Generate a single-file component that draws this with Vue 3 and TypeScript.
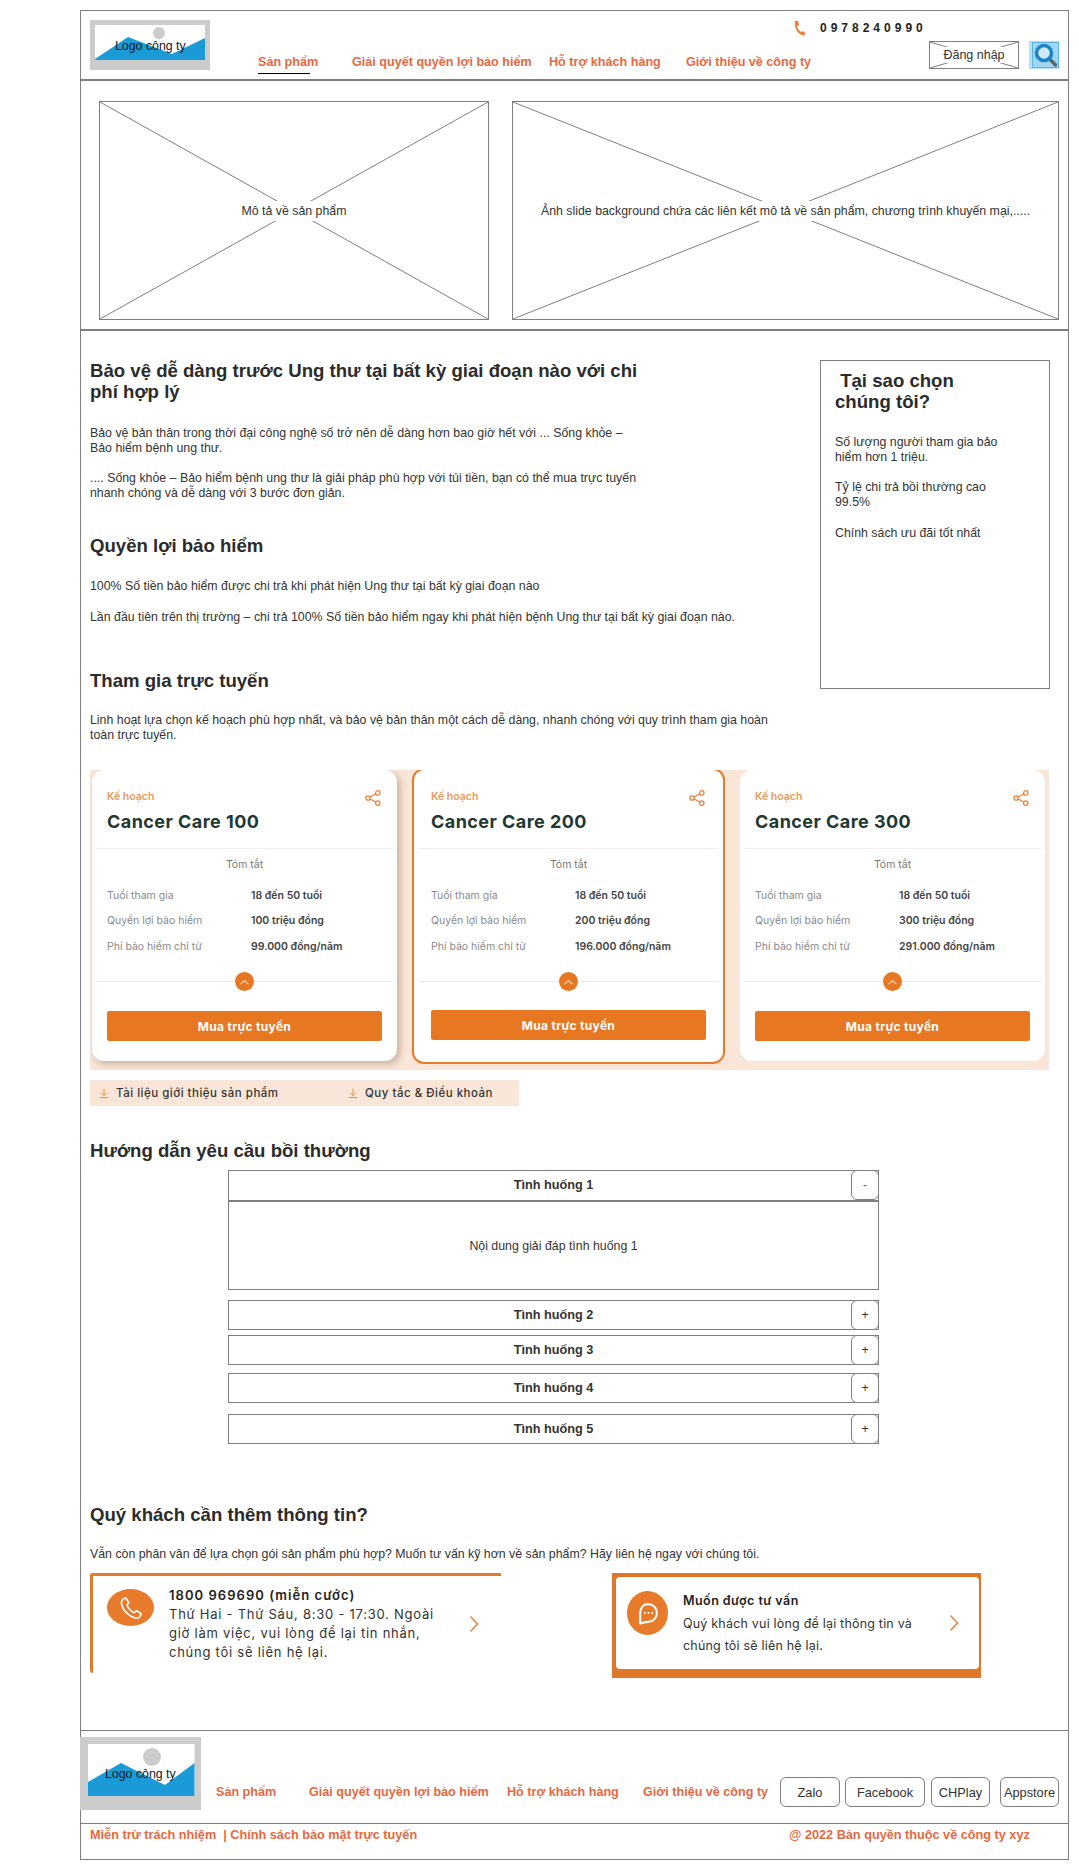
<script setup lang="ts">
const nav = ['Sản phẩm', 'Giải quyết quyền lợi bảo hiểm', 'Hỗ trợ khách hàng', 'Giới thiệu về công ty']
const plans = [
  { name: 'Cancer Care 100', benefit: '100 triệu đồng', fee: '99.000 đồng/năm', cls: 'plan-a' },
  { name: 'Cancer Care 200', benefit: '200 triệu đồng', fee: '196.000 đồng/năm', cls: 'plan-b' },
  { name: 'Cancer Care 300', benefit: '300 triệu đồng', fee: '291.000 đồng/năm', cls: 'plan-c' },
]
const cases = [2, 3, 4, 5]
const stores = ['Zalo', 'Facebook', 'CHPlay', 'Appstore']
</script>

<template>
  <div class="page">
    <div class="frame">
      <header class="top">
        <div class="logo">
          <svg class="fill" viewBox="0 0 120 50">
            <rect width="120" height="50" fill="#cccccc" />
            <rect x="5" y="5" width="110" height="35" fill="#ffffff" />
            <circle cx="69" cy="13" r="6" fill="#cccccc" />
            <path d="M5 39 38 17 82 34 115 18V40H5Z" fill="#1a9ad6" />
          </svg>
          <span class="logo-text">Logo công ty</span>
        </div>
        <nav class="nav">
          <a v-for="(n, i) in nav" :key="n" class="nav-item" :class="{ active: i === 0 }">{{ n }}</a>
        </nav>
        <div class="top-right">
          <div class="phone">
            <svg class="phone-ico" viewBox="0 0 14 16">
              <path d="M2 1 5 .6 6 5 4.200 6.200C4.700 8.500 6 10.500 8 12L9.800 11 12.800 13.400 11 15.400C6 15.800 .5 8 2 1Z" fill="#e9833c" />
            </svg>
            <span class="phone-num">0978240990</span>
          </div>
          <div class="actions">
            <button class="login">
              <svg class="fill" viewBox="0 0 100 100" preserveAspectRatio="none">
                <line x1="0" y1="0" x2="100" y2="100" vector-effect="non-scaling-stroke" />
                <line x1="100" y1="0" x2="0" y2="100" vector-effect="non-scaling-stroke" />
              </svg>
              <span class="login-text">Đăng nhập</span>
            </button>
            <div class="search">
              <svg viewBox="0 0 30 28" width="30" height="28">
                <rect width="30" height="28" fill="#b6dff3" />
                <rect x="3.500" y="1.500" width="26" height="25" fill="#9fd6f2" stroke="#58b4e2" />
                <line x1="20" y1="17.500" x2="26.500" y2="24" stroke="#58646c" stroke-width="3.500" stroke-linecap="round" />
                <circle cx="15" cy="12" r="7.500" fill="#cfeaf8" stroke="#1a86c8" stroke-width="3.500" />
              </svg>
            </div>
          </div>
        </div>
      </header>

      <section class="hero">
        <div class="ph ph-a">
          <svg class="fill" viewBox="0 0 100 100" preserveAspectRatio="none">
            <line x1="0" y1="0" x2="100" y2="100" vector-effect="non-scaling-stroke" />
            <line x1="100" y1="0" x2="0" y2="100" vector-effect="non-scaling-stroke" />
          </svg>
          <span class="ph-text">Mô tả về sản phẩm</span>
        </div>
        <div class="ph ph-b">
          <svg class="fill" viewBox="0 0 100 100" preserveAspectRatio="none">
            <line x1="0" y1="0" x2="100" y2="100" vector-effect="non-scaling-stroke" />
            <line x1="100" y1="0" x2="0" y2="100" vector-effect="non-scaling-stroke" />
          </svg>
          <span class="ph-text">Ảnh slide background chứa các liên kết mô tả về sản phẩm, chương trình khuyến mại,.....</span>
        </div>
      </section>

      <main class="main">
        <div class="intro">
          <div class="intro-left">
            <h1 class="h">Bảo vệ dễ dàng trước Ung thư tại bất kỳ giai đoạn nào với chi phí hợp lý</h1>
            <p class="p p1">Bảo vệ bản thân trong thời đại công nghệ số trở nên dễ dàng hơn bao giờ hết với ... Sống khỏe – Bảo hiểm bệnh ung thư.</p>
            <p class="p p2">.... Sống khỏe – Bảo hiểm bệnh ung thư là giải pháp phù hợp với túi tiền, bạn có thể mua trực tuyến nhanh chóng và dễ dàng với 3 bước đơn giản.</p>
            <h2 class="h h-benefit">Quyền lợi bảo hiểm</h2>
            <p class="p p-b1">100% Số tiền bảo hiểm được chi trả khi phát hiện Ung thư tại bất kỳ giai đoạn nào</p>
            <p class="p p-b2">Lần đầu tiên trên thị trường – chi trả 100% Số tiền bảo hiểm ngay khi phát hiện bệnh Ung thư tại bất kỳ giai đoạn nào.</p>
            <h2 class="h h-join">Tham gia trực tuyến</h2>
            <p class="p p-join">Linh hoạt lựa chọn kế hoạch phù hợp nhất, và bảo vệ bản thân một cách dễ dàng, nhanh chóng với quy trình tham gia hoàn toàn trực tuyến.</p>
          </div>
          <aside class="why">
            <h2 class="h why-title">&nbsp;Tại sao chọn chúng tôi?</h2>
            <p class="p why-1">Số lượng người tham gia bảo hiểm hơn 1 triệu.</p>
            <p class="p why-2">Tỷ lệ chi trả bồi thường cao 99.5%</p>
            <p class="p why-3">Chính sách ưu đãi tốt nhất</p>
          </aside>
        </div>

        <div class="plans">
          <article v-for="pl in plans" :key="pl.name" class="plan" :class="pl.cls">
            <div class="plan-head">
              <div class="plan-kicker">Kế hoạch</div>
              <div class="plan-name">{{ pl.name }}</div>
              <svg class="share" viewBox="0 0 16 16" width="16" height="16">
                <circle cx="12.800" cy="2.900" r="2.200" />
                <circle cx="3" cy="8" r="2.200" />
                <circle cx="12.800" cy="13.100" r="2.200" />
                <path d="M5 7 10.800 4M5 9 10.800 12" />
              </svg>
            </div>
            <div class="plan-sum">Tóm tắt</div>
            <dl class="plan-rows">
              <dt>Tuổi tham gia</dt><dd>18 đến 50 tuổi</dd>
              <dt>Quyền lợi bảo hiểm</dt><dd>{{ pl.benefit }}</dd>
              <dt>Phí bảo hiểm chỉ từ</dt><dd>{{ pl.fee }}</dd>
            </dl>
            <div class="plan-split">
              <span class="plan-toggle">
                <svg viewBox="0 0 10 6" width="9" height="6"><path d="M1 5 5 1.500 9 5" fill="none" stroke="#f7c9a3" stroke-width="1.500" stroke-linecap="round" /></svg>
              </span>
            </div>
            <button class="plan-buy">Mua trực tuyến</button>
          </article>
        </div>

        <div class="docs">
          <span class="doc doc-a">
            <svg viewBox="0 0 10 10" width="10" height="10" class="dl"><path d="M5 .5V7.500M1.800 4.500 5 7.500 8.200 4.500M.5 9.500H9.500" /></svg>
            Tài liệu giới thiệu sản phẩm
          </span>
          <span class="doc doc-b">
            <svg viewBox="0 0 10 10" width="10" height="10" class="dl"><path d="M5 .5V7.500M1.800 4.500 5 7.500 8.200 4.500M.5 9.500H9.500" /></svg>
            Quy tắc &amp; Điều khoản
          </span>
        </div>

        <h2 class="h h-claim">Hướng dẫn yêu cầu bồi thường</h2>
        <div class="acc">
          <div class="acc-open">
            <div class="acc-row acc-row-open">
              <span class="acc-title">Tình huống 1</span>
              <span class="acc-btn acc-minus">-</span>
            </div>
            <div class="acc-body">Nội dung giải đáp tình huống 1</div>
          </div>
          <div v-for="c in cases" :key="c" class="acc-row acc-closed">
            <span class="acc-title">Tình huống {{ c }}</span>
            <span class="acc-btn">+</span>
          </div>
        </div>

        <h2 class="h h-more">Quý khách cần thêm thông tin?</h2>
        <p class="p p-more">Vẫn còn phân vân để lựa chọn gói sản phẩm phù hợp? Muốn tư vấn kỹ hơn về sản phẩm? Hãy liên hệ ngay với chúng tôi.</p>

        <div class="cta-row">
          <div class="cta-a">
            <span class="cta-a-ico">
              <svg viewBox="0 0 24 24" width="30" height="26" fill="none" stroke="#fff" stroke-width="1.500" stroke-linejoin="round">
                <path d="M7 2.500 10 7 8.300 9.200C9.500 12.300 12 15 15 16.300L17.200 14.500 21.500 17.500 19.700 20.600C18.800 22 16 21.500 13 20 8 17.500 4.500 13 3.300 8.500 2.600 5.800 3.500 4 7 2.500Z" />
              </svg>
            </span>
            <div class="cta-a-text">
              <div class="cta-a-title">1800 969690 (miễn cước)</div>
              <div>Thứ Hai - Thứ Sáu, 8:30 - 17:30. Ngoài</div>
              <div>giờ làm việc, vui lòng để lại tin nhắn,</div>
              <div>chúng tôi sẽ liên hệ lại.</div>
            </div>
            <svg class="chev chev-a" viewBox="0 0 10 18" width="10" height="18"><path d="M1.500 1.500 8.500 9 1.500 16.500" /></svg>
          </div>
          <div class="cta-b">
            <div class="cta-b-in">
              <span class="cta-b-ico">
                <svg viewBox="0 0 24 24" width="25" height="27" fill="none">
                  <path d="M5 21.500V11.500C5 6.500 8 3 12.500 3S21 6.500 21 11.500 17.500 20 12.500 20C10 20 8 20.500 5 21.500Z" stroke="#fff" stroke-width="2" stroke-linejoin="round" />
                  <circle cx="9.500" cy="11.500" r="1" fill="#fff" /><circle cx="13" cy="11.500" r="1" fill="#fff" /><circle cx="16.500" cy="11.500" r="1" fill="#fff" />
                </svg>
              </span>
              <div class="cta-b-text">
                <div class="cta-b-title">Muốn được tư vấn</div>
                <div>Quý khách vui lòng để lại thông tin và</div>
                <div>chúng tôi sẽ liên hệ lại.</div>
              </div>
              <svg class="chev chev-b" viewBox="0 0 10 18" width="10" height="18"><path d="M1.500 1.500 8.500 9 1.500 16.500" /></svg>
            </div>
          </div>
        </div>
      </main>

      <footer class="foot">
        <div class="foot-top">
          <div class="foot-logo">
            <svg class="fill" viewBox="0 0 121 73">
              <rect width="121" height="73" fill="#cccccc" />
              <rect x="8" y="7" width="106.500" height="52" fill="#ffffff" />
              <ellipse cx="72" cy="20" rx="9" ry="9" fill="#cccccc" />
              <path d="M8 45 41 26 85 48 114.500 26V59H8Z" fill="#1a9ad6" />
            </svg>
            <span class="foot-logo-text">Logo công ty</span>
          </div>
          <nav class="foot-nav">
            <a v-for="n in nav" :key="n" class="nav-item">{{ n }}</a>
          </nav>
          <div class="stores">
            <span v-for="s in stores" :key="s" class="store">{{ s }}</span>
          </div>
        </div>
        <div class="foot-bottom">
          <span>Miễn trừ trách nhiệm&nbsp; | Chính sách bảo mật trực tuyến</span>
          <span>@ 2022 Bản quyền thuộc về công ty xyz</span>
        </div>
      </footer>
    </div>
  </div>
</template>

<style>
html, body { margin: 0; background: #ffffff; }
</style>

<style scoped>
* { box-sizing: border-box; }
.page {
  width: 1079px;
  height: 1869px;
  padding: 10px 0 0 80px;
  font-family: "Liberation Sans", Arial, sans-serif;
  font-size: 12.350px;
  line-height: 15px;
  color: #333333;
  overflow: hidden;
}
.frame { width: 989px; height: 1850px; border: 1px solid #7f7f7f; }
.fill { position: absolute; inset: 0; width: 100%; height: 100%; display: block; }
.fill line { stroke: #7f7f7f; stroke-width: 1; }

/* header */
.top { display: flex; height: 70px; border-bottom: 2px solid #7f7f7f; padding: 9px 0 0 9px; }
.logo { position: relative; width: 120px; height: 50px; flex: none; }
.logo-text { position: absolute; left: 25px; top: 19px; color: #111827; }
.nav {
  display: grid;
  grid-template-columns: 94px 197px 137px auto;
  margin: 35px 0 0 48px;
  width: 470px;
  height: 22px;
}
.nav-item { color: #e8683f; font-size: 12.600px; font-weight: 700; white-space: nowrap; line-height: 15px; }
.nav-item.active { position: relative; }
.nav-item.active::after {
  content: "";
  position: absolute;
  left: 0;
  top: 18px;
  width: 52px;
  height: 1px;
  background: #000000;
}
.top-right { width: 266px; flex: none; margin-left: 65px; }
.phone { display: flex; align-items: center; margin: 1px 0 0 0; height: 14px; }
.phone-ico { width: 14px; height: 16px; flex: none; }
.phone-num { margin-left: 13px; font-size: 12px; font-weight: 700; letter-spacing: 4px; color: #222222; }
.actions { display: flex; margin: 6px 0 0 136px; gap: 10px; }
.login { position: relative; width: 90px; height: 28px; padding: 0; background: #fff; border: 1px solid #7f7f7f; font: inherit; font-size: 12.500px; color: #333; display: flex; align-items: center; justify-content: center; }
.login-text { position: relative; background: #fff; padding: 0 6px; line-height: 16px; }
.search { width: 30px; height: 28px; }
.search svg { display: block; }

/* hero */
.hero { display: flex; height: 250px; border-bottom: 2px solid #7f7f7f; padding: 20px 0 0 18px; gap: 23px; }
.ph { position: relative; height: 219px; border: 1px solid #7f7f7f; display: flex; align-items: center; justify-content: center; }
.ph-a { width: 390px; }
.ph-b { width: 547px; }
.ph-text { position: relative; background: #fff; line-height: 20px; padding: 0 4px; white-space: nowrap; }

/* text */
.main { padding: 29px 0 0 9px; }
.h { margin: 0; font-size: 18.600px; line-height: 21px; font-weight: 700; color: #2b2b2b; }
.p { margin: 0; }
.intro { display: flex; height: 383px; }
.intro-left { width: 680px; }
.intro-left h1 { width: 560px; }
.p1, .p2 { width: 550px; }
.p1 { margin-top: 24px; }
.p2 { margin-top: 15px; }
.h-benefit { margin-top: 34px; }
.p-b1 { margin-top: 23px; }
.p-b2 { margin-top: 16px; }
.h-join { margin-top: 45px; }
.p-join { margin-top: 22px; width: 680px; }
.why { width: 230px; height: 329px; margin-left: 50px; border: 1px solid #7f7f7f; padding: 9px 40px 0 14px; }
.why-title { line-height: 21px; }
.why-1 { margin-top: 23px; }
.why-2 { margin-top: 15px; }
.why-3 { margin-top: 16px; }

/* plans */
.plans {
  display: flex;
  width: 959px;
  height: 300px;
  margin-top: 27px;
  padding-left: 2px;
  gap: 15px;
  background: #f9e6d8;
  overflow: hidden;
  font-family: Inter, "Noto Sans", sans-serif;
}
.plan { position: relative; width: 305px; height: 291px; padding: 0 15px; background: #fff; border-radius: 12px; }
.plan-a { box-shadow: 3px 3px 7px rgba(120, 90, 60, .38); }
.plan-b { width: 313px; height: 296px; margin-top: -2px; padding: 0 17px; border: 2px solid #e87a2b; }
.plan-head { position: relative; height: 79px; margin: 0 -12px; padding: 18px 12px 0; border-bottom: 1px solid #f3f0ed; }
.plan-kicker { font-size: 10.500px; line-height: 18px; font-weight: 600; color: #ea9a5e; }
.plan-name { margin-top: 4px; font-size: 18px; line-height: 24px; font-weight: 700; color: #1f3833; white-space: nowrap; letter-spacing: .45px; }
.share { position: absolute; right: 13px; top: 20px; fill: none; stroke: #e9833c; stroke-width: 1.300; }
.plan-sum { margin-top: 8px; text-align: center; font-size: 10.500px; line-height: 16px; color: #777; }
.plan-rows { display: grid; grid-template-columns: 144px 1fr; grid-auto-rows: 25.500px; margin: 9.500px 0 0; font-size: 10.500px; line-height: 25px; }
.plan-rows dt { color: #8a8a8a; white-space: nowrap; }
.plan-rows dd { margin: 0; color: #444; font-weight: 600; white-space: nowrap; }
.plan-split { position: relative; height: 1px; margin: 22px -12px 0; background: #ecebe9; }
.plan-toggle { position: absolute; left: 50%; top: -9px; width: 19px; height: 19px; margin-left: -10px; border-radius: 50%; background: #e87722; display: flex; align-items: center; justify-content: center; }
.plan-buy { display: block; width: 275px; height: 30px; margin-top: 29px; border: 0; border-radius: 2px; background: #e87722; color: #fff; font: 700 12px/30px Inter, "Noto Sans", sans-serif; letter-spacing: .3px; }
.plan-b .plan-buy { margin-top: 28px; }

.docs {
  display: flex;
  width: 429px;
  height: 26px;
  margin-top: 10px;
  padding-left: 9px;
  align-items: center;
  background: #f9e6d8;
  font-family: Inter, "Noto Sans", sans-serif;
  font-size: 11.500px;
  font-weight: 500;
  letter-spacing: .5px;
  color: #333;
}
.doc { display: inline-flex; align-items: center; gap: 7px; white-space: nowrap; }
.doc-a { width: 249px; }
.dl { fill: none; stroke: #e9913f; stroke-width: 1; }

/* accordion */
.h-claim { margin-top: 34px; }
.acc { width: 651px; margin: 9px 0 0 138px; }
.acc-open { border: 1px solid #7f7f7f; height: 120px; }
.acc-row { position: relative; display: flex; align-items: center; justify-content: center; height: 30px; }
.acc-row-open { height: 29px; border-bottom: 2px solid #7f7f7f; box-sizing: content-box; }
.acc-closed { border: 1px solid #7f7f7f; }
.acc-closed:nth-child(2) { margin-top: 10px; }
.acc-closed:nth-child(3) { margin-top: 5px; }
.acc-closed:nth-child(4) { margin-top: 8px; }
.acc-closed:nth-child(5) { margin-top: 11px; }
.acc-title { font-size: 12.700px; font-weight: 700; color: #333; }
.acc-btn { position: absolute; right: -1px; top: -1px; width: 28px; height: 30px; border: 1px solid #7f7f7f; border-radius: 6px; display: flex; align-items: center; justify-content: center; background: #fff; }
.acc-minus { color: #666; }
.acc-body { display: flex; height: 88px; align-items: center; justify-content: center; }

/* contact */
.h-more { margin-top: 60px; }
.p-more { margin-top: 22px; }
.cta-row { display: flex; margin-top: 11px; font-family: Inter, "Noto Sans", sans-serif; color: #333; }
.cta-a { display: flex; width: 411px; height: 100px; border-top: 3px solid #e27a2d; border-left: 3px solid #e27a2d; background: #fff; position: relative; padding: 0 0 0 14px; border-radius: 3px 0 0 3px; }
.cta-a-ico { flex: none; width: 47px; height: 37px; margin-top: 13px; border-radius: 50%; background: #e87a2b; display: flex; align-items: center; justify-content: center; }
.cta-a-text { margin: 10px 0 0 15px; font-size: 13px; line-height: 19px; letter-spacing: .75px; white-space: nowrap; }
.cta-a-title { font-weight: 600; color: #222; letter-spacing: 1.050px; }
.chev { position: absolute; fill: none; stroke: #e9833c; stroke-width: 1.500; }
.chev-a { left: 376px; top: 39px; }
.cta-b { width: 369px; height: 105px; margin-left: 111px; padding: 4px 2px 9px 4px; background: #e0762a; }
.cta-b-in { position: relative; display: flex; height: 92px; padding: 0 0 0 11px; background: #fff; border-radius: 4px; }
.cta-b-ico { flex: none; width: 41px; height: 44px; margin-top: 14px; border-radius: 50%; background: #e87a2b; display: flex; align-items: center; justify-content: center; }
.cta-b-text { margin: 13px 0 0 15px; font-size: 12.500px; line-height: 22.500px; letter-spacing: .2px; white-space: nowrap; }
.cta-b-title { font-weight: 600; color: #222; letter-spacing: .45px; }
.chev-b { left: 333px; top: 37px; }

/* footer */
.foot { margin-top: 52px; margin-left: -1px; border-top: 1px solid #7f7f7f; width: 989px; }
.foot-top { display: flex; height: 93px; padding-top: 6px; border-bottom: 1px solid #7f7f7f; }
.foot-logo { position: relative; width: 121px; height: 73px; flex: none; }
.foot-logo-text { position: absolute; left: 25px; top: 30px; color: #111827; }
.foot-nav { display: grid; grid-template-columns: 93px 198px 136px auto; width: 434px; margin: 48px 0 0 15px; }
.stores { display: flex; margin: 40px 0 0 130px; }
.store { display: flex; align-items: center; justify-content: center; height: 30px; font-size: 12.800px; border: 1px solid #7f7f7f; border-radius: 6px; background: #fff; white-space: nowrap; }
.store:nth-child(1) { width: 60px; }
.store:nth-child(2) { width: 80px; margin-left: 5px; }
.store:nth-child(3) { width: 59px; margin-left: 6px; }
.store:nth-child(4) { width: 59px; margin-left: 10px; }
.foot-bottom { display: flex; padding: 4px 0 0 10px; color: #e8683f; font-size: 12.700px; font-weight: 700; }
.foot-bottom span:first-child { width: 699px; }
</style>
